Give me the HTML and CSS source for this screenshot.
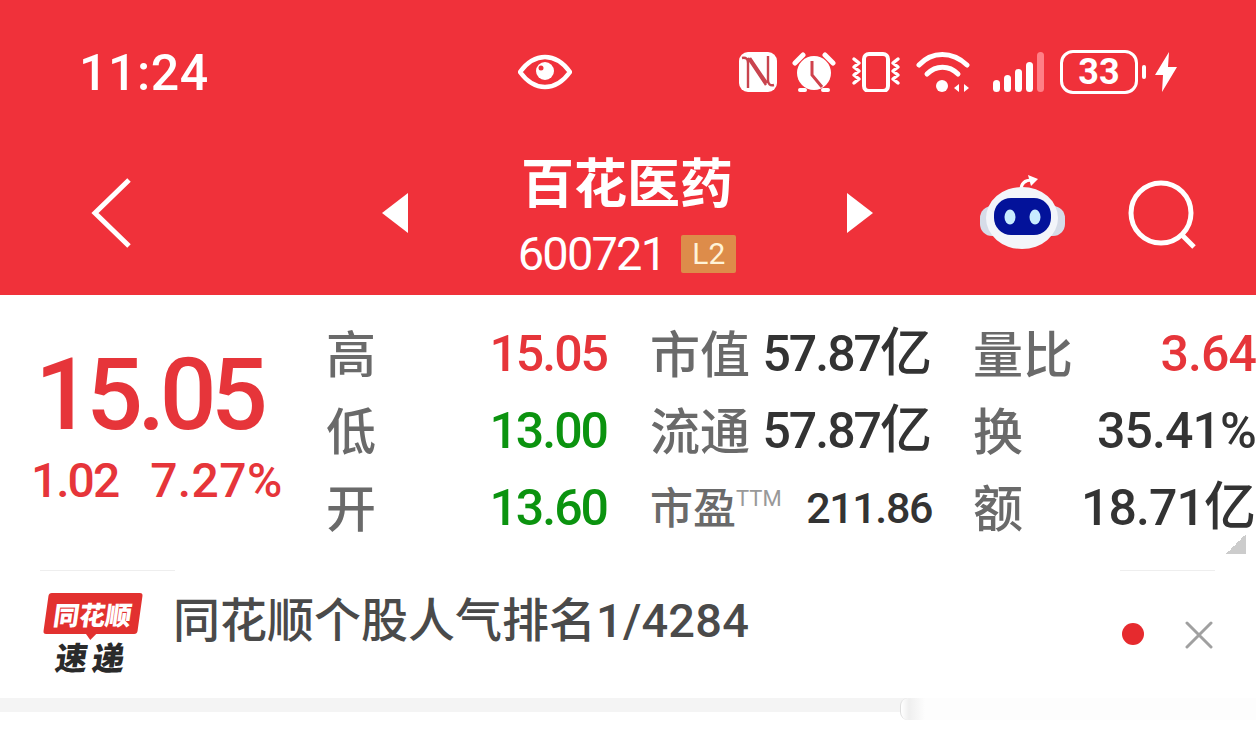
FILE: index.html
```html
<!DOCTYPE html>
<html lang="zh-CN">
<head>
<meta charset="utf-8">
<title>百花医药</title>
<link rel="stylesheet" href="styles.css">
</head>
<body>
<div class="app">
  <header class="hero">
    <div class="status">
      <div class="time">11:24</div>
      <svg class="eye" width="54" height="36" viewBox="0 0 54 36"><path d="M2 18C10 7 18 3 27 3s17 4 25 15c-8 11-16 15-25 15S10 29 2 18Z" fill="none" stroke="#fff" stroke-width="4.5" stroke-linejoin="round"/><circle cx="27" cy="17" r="9" fill="#fff"/><circle cx="23" cy="14" r="2.5" fill="#f0313a"/></svg>
      <div class="status-icons">
        <svg width="38" height="40" viewBox="0 0 38 40"><rect width="38" height="40" rx="9" fill="#fff"/><path d="M3 6c4-1 6 1 6 5v25M9 6l18 27M11 6l17 25M29 4v24c0 4 2 6 6 5" fill="none" stroke="#c9444e" stroke-width="2.4"/></svg>
        <svg width="44" height="40" viewBox="0 0 44 40"><path d="M3 11 11 3M41 11 33 3" stroke="#fff" stroke-width="5" stroke-linecap="round"/><circle cx="22" cy="21" r="17" fill="#fff"/><path d="M20 9v14l10 12" fill="none" stroke="#d0424c" stroke-width="3"/><path d="M8 38h5M31 38h5" stroke="#fff" stroke-width="4" stroke-linecap="round"/></svg>
        <svg width="50" height="40" viewBox="0 0 50 40"><rect x="13" y="2" width="24" height="37" rx="5" fill="none" stroke="#fff" stroke-width="4"/><path d="M3 7l5 4-5 4 5 4-5 4 5 4-5 4M47 7l-5 4 5 4-5 4 5 4-5 4 5 4" fill="none" stroke="#fff" stroke-width="3.5" stroke-linecap="round" stroke-linejoin="round"/></svg>
        <svg width="54" height="42" viewBox="0 0 54 42"><path d="M3 14C16 0 36 0 51 14" fill="none" stroke="#fff" stroke-width="5" stroke-linecap="round"/><path d="M11 23c9-9 22-9 31 0" fill="none" stroke="#fff" stroke-width="5" stroke-linecap="round"/><circle cx="26" cy="35" r="6" fill="#fff"/><path d="M38 37l5-4v8ZM53 37l-5-4v8Z" fill="#fff"/></svg>
        <svg class="signal" width="51" height="40" viewBox="0 0 51 40"><rect y="28" width="7" height="12" rx="3.5" fill="#fff"/><rect x="11" y="23" width="7" height="17" rx="3.5" fill="#fff"/><rect x="22" y="17" width="7" height="23" rx="3.5" fill="#fff"/><rect x="33" y="10" width="7" height="30" rx="3.5" fill="#fff"/><rect x="44" width="7" height="40" rx="3.5" fill="#ff7f86"/></svg>
        <div class="battery"><span class="battery-body">33</span><span class="battery-nub"></span></div>
        <svg width="22" height="40" viewBox="0 0 22 40"><path d="M14 0 0 23h8l-1 17 15-25h-9Z" fill="#fff"/></svg>
      </div>
    </div>
    <nav class="nav">
      <svg class="back" width="42" height="72" viewBox="0 0 42 72"><path d="M38 3 4 36l34 33" fill="none" stroke="#fff" stroke-width="5"/></svg>
      <svg class="prev" width="26" height="40" viewBox="0 0 26 40"><path d="M26 0v40L0 20Z" fill="#fff"/></svg>
      <div class="stock">
        <div class="stock-name">百花医药</div>
        <div class="stock-code"><span>600721</span><span class="badge">L2</span></div>
      </div>
      <svg class="next" width="26" height="40" viewBox="0 0 26 40"><path d="M0 0v40l26-20Z" fill="#fff"/></svg>
      <svg class="robot" width="86" height="76" viewBox="0 0 86 76"><path d="M41 17c0-7 4-10 11-10" fill="none" stroke="#fff" stroke-width="3"/><path d="M48 2l10 4-7 7Z" fill="#fff"/><rect y="33" width="85" height="30" rx="12" fill="#d6dce8"/><ellipse cx="42" cy="45" rx="36" ry="31" fill="#f3f5fa"/><rect x="14" y="25" width="57" height="37" rx="17" fill="#03129a"/><ellipse cx="30" cy="44" rx="5.5" ry="7.5" fill="#c8ecff"/><ellipse cx="55" cy="44" rx="5.5" ry="7.5" fill="#c8ecff"/></svg>
      <svg class="search" width="70" height="70" viewBox="0 0 70 70"><circle cx="33" cy="33" r="30" fill="none" stroke="#fff" stroke-width="5"/><path d="M54 55l12 12" stroke="#fff" stroke-width="5"/></svg>
    </nav>
  </header>

  <section class="quote">
    <div class="price">
      <div class="price-main">15.05</div>
      <div class="price-change"><span>1.02</span><span class="pct">7.27%</span></div>
    </div>
    <div class="stats">
      <span class="label">高</span><span class="num red">15.05</span>
      <span class="label col-b">市值</span><span class="num dark">57.87<i class="cjk">亿</i></span>
      <span class="label col-c">量比</span><span class="num red num-wide">3.64</span>

      <span class="label">低</span><span class="num green">13.00</span>
      <span class="label col-b">流通</span><span class="num dark">57.87<i class="cjk">亿</i></span>
      <span class="label col-c">换</span><span class="num dark num-wide">35.41%</span>

      <span class="label">开</span><span class="num green">13.60</span>
      <span class="label col-b label-small">市盈<sup class="ttm">TTM</sup></span><span class="num dark num-small">211.86</span>
      <span class="label col-c">额</span><span class="num dark num-wide">18.71<i class="cjk">亿</i></span>
    </div>
    <div class="corner"></div>
  </section>

  <div class="rules"><span class="rule rule-left"></span><span class="rule rule-right"></span></div>

  <section class="news">
    <div class="logo">
      <div class="logo-flag"><span class="logo-top">同花顺</span></div>
      <div class="logo-bottom">速递</div>
    </div>
    <div class="news-text">同花顺个股人气排名<span class="news-num">1/4284</span></div>
    <span class="dot"></span>
    <svg class="close" width="28" height="28" viewBox="0 0 28 28"><path d="M2 2l24 24M26 2 2 26" stroke="#a0a0a0" stroke-width="3" stroke-linecap="round"/></svg>
  </section>

  <div class="strip"><span class="strip-fade"></span></div>
</div>
</body>
</html>
```
FILE: styles.css
```css
* { box-sizing: border-box; }
html, body { margin: 0; padding: 0; background: #fff; }
body { font-family: "Noto Sans CJK SC", sans-serif; }
.app { width: 1256px; height: 733px; overflow: hidden; display: flex; flex-direction: column; background: #fff; }

.hero { height: 295px; background: #f0313a; color: #fff; display: flex; flex-direction: column; }
.status { height: 146px; display: flex; align-items: flex-start; padding: 50px 79px 0 79px; }
.time { width: 439px; font: 500 50px/46px Roboto, sans-serif; letter-spacing: 0.6px; }
.eye { margin-top: 4px; }
.status-icons { margin-left: auto; display: flex; align-items: center; gap: 15px; }
.signal { margin-left: 8px; }
.battery { display: flex; align-items: center; margin-left: 1px; margin-right: -6px; }
.battery-body { width: 78px; height: 44px; border: 3px solid #fff; border-radius: 13px; font: 700 36px/38px Roboto, sans-serif; text-align: center; }
.battery-nub { width: 4px; height: 14px; margin-left: 4px; background: #fff; border-radius: 2px; }

.nav { height: 149px; display: flex; align-items: flex-start; padding-left: 91px; }
.back { margin-top: 31px; }
.prev { margin: 47px 0 0 249px; }
.stock { width: 438px; display: flex; flex-direction: column; align-items: center; margin-top: -4px; }
.next { margin: 47px 0 0 1px; }
.robot { margin: 27px 0 0 107px; }
.search { margin: 34px 0 0 62px; }
.stock-name { font-size: 53px; font-weight: 700; line-height: 76px; white-space: nowrap; }
.stock-code { display: flex; align-items: center; gap: 16px; font: 400 47px/50px Roboto, sans-serif; letter-spacing: -1.8px; white-space: nowrap; margin-top: 11px; }
.badge { width: 55px; height: 38px; border-radius: 2px; background: #dd8c4a; color: #fff3d8; font-size: 30px; line-height: 38px; text-align: center; letter-spacing: 0; }

.quote { position: relative; display: flex; height: 275px; }
.price { width: 326px; padding: 44px 0 0 31px; color: #e6353a; }
.price-main { font: 500 100px/112px Roboto, sans-serif; letter-spacing: -5.6px; margin-left: 4px; }
.price-change { display: flex; gap: 32px; font: 500 48px/50px Roboto, sans-serif; letter-spacing: -2px; margin-top: 5px; }
.pct { letter-spacing: 0.4px; }
.stats { flex: 1; display: grid; grid-template-columns: 150px 131px 145px 180px 143px 181px; grid-template-rows: repeat(3, 77px); padding-top: 21px; align-items: start; }
.label { font-size: 50px; font-weight: 500; line-height: 70px; color: #6a6a6a; white-space: nowrap; }
.col-b { padding-left: 43px; }
.col-c { padding-left: 41px; }
.label-small { font-size: 43px; }
.ttm { font: 400 22px/22px Roboto, sans-serif; vertical-align: 18px; color: #999; }
.num { font: 500 50px/77px Roboto, sans-serif; text-align: right; letter-spacing: -2px; white-space: nowrap; }
.num-wide { letter-spacing: -0.9px; }
.num-small { font-size: 43px; letter-spacing: -1.4px; }
.cjk { font-style: normal; font-family: "Noto Sans CJK SC", sans-serif; font-weight: 500; font-size: 52px; line-height: 0; letter-spacing: 0; }
.red { color: #e6353a; }
.green { color: #0b930f; }
.dark { color: #333; }
.corner { position: absolute; left: 1226px; top: 239px; width: 20px; height: 20px; background: linear-gradient(135deg, transparent 50%, #ccc 50%); }

.rules { height: 1px; display: flex; justify-content: space-between; padding: 0 41px 0 40px; }
.rule { display: block; height: 1px; background: #eee; }
.rule-left { width: 135px; }
.rule-right { width: 95px; }

.news { height: 127px; display: flex; align-items: flex-start; padding: 22px 0 0 43px; }
.logo { flex: none; width: 100px; height: 82px; display: flex; flex-direction: column; align-items: center; }
.logo-flag { position: relative; width: 94px; height: 41px; background: #e2312f; border-radius: 3px; transform: skewX(-8deg); display: flex; align-items: center; justify-content: center; }
.logo-flag::after { content: ""; position: absolute; left: 42px; bottom: -6px; border-left: 6px solid transparent; border-right: 6px solid transparent; border-top: 7px solid #e2312f; }
.logo-top { font-size: 26px; font-weight: 900; line-height: 30px; color: #fff; white-space: nowrap; }
.logo-bottom { font-size: 32px; font-weight: 900; line-height: 38px; color: #2a2a2a; letter-spacing: 5px; white-space: nowrap; margin-top: 3px; transform: skewX(-8deg); }
.news-text { width: 970px; margin-left: 30px; margin-top: -6px; font-size: 47px; font-weight: 500; line-height: 60px; color: #4a4a4a; white-space: nowrap; }
.news-num { font-family: Roboto, sans-serif; font-weight: 500; letter-spacing: 0.2px; }
.dot { flex: none; width: 22px; height: 22px; margin-left: -21px; margin-top: 30px; border-radius: 50%; background: #e62a2e; }
.close { flex: none; margin-left: 41px; margin-top: 28px; }

.strip { position: relative; height: 14px; background: #f4f4f4; }
.strip-fade { position: absolute; left: 900px; right: 0; top: 0; height: 22px; background: linear-gradient(90deg, #fff 0, #efefef 8px, #fdfdfd 24px); border-left: 1px solid #ddd; border-radius: 8px 0 0 8px; }
```
